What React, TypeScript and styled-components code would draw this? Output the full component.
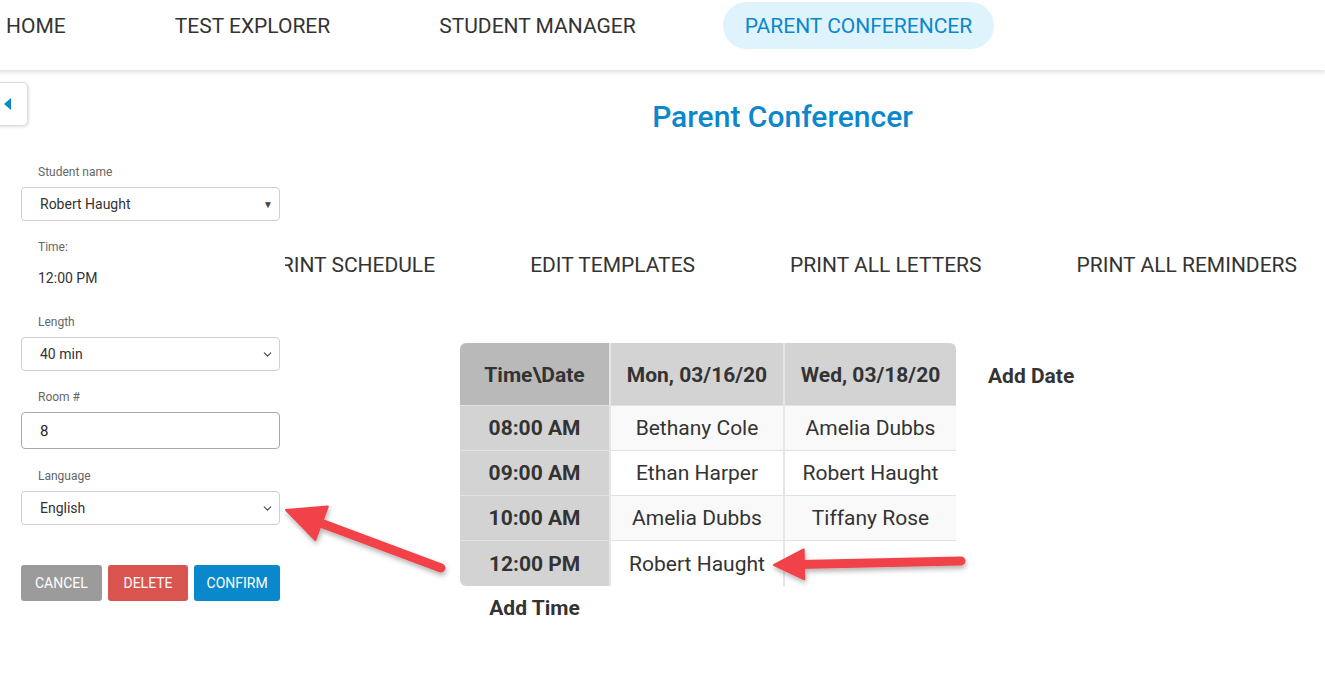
import React from "react"
import styled, {createGlobalStyle} from "styled-components"
import {ChevronDown} from "lucide-react"

const GlobalStyle = createGlobalStyle`
  html, body {
    margin: 0;
    padding: 0;
    background: #fff;
    font-family: Roboto, "Noto Sans", "Liberation Sans", sans-serif;
    color: #333;
  }
  * { box-sizing: border-box; }
`

const Page = styled.div`
  position: relative;
  width: 1325px;
  height: 694px;
  overflow: hidden;
`

const NavBar = styled.nav`
  height: 70px;
  display: flex;
  align-items: flex-start;
  gap: 65px;
  padding-top: 2px;
  margin-left: -16px;
  box-shadow: 0 2px 5px rgba(0, 0, 0, 0.14);
  position: relative;
  z-index: 2;
  background: #fff;
`

const NavItem = styled.div<{$active?: boolean}>`
  height: 47px;
  display: flex;
  align-items: center;
  padding: 0 22px;
  border-radius: 24px;
  font-size: 21px;
  color: ${(p) => (p.$active ? "#0a88cc" : "#333")};
  background: ${(p) => (p.$active ? "#dff3fc" : "transparent")};
`

const Main = styled.main`
  display: flex;
  flex-direction: column;
`

const Title = styled.h1`
  margin: 29px 0 0 240px;
  text-align: center;
  font-size: 30px;
  line-height: 36px;
  font-weight: 500;
  color: #0b88cc;
`

const ActionRow = styled.div`
  display: flex;
  justify-content: flex-end;
  gap: 95px;
  padding-right: 28px;
  margin-top: 118px;
`

const ActionButton = styled.div`
  font-size: 21px;
  line-height: 24px;
  color: #333;
  white-space: nowrap;
`

const ScheduleArea = styled.div`
  display: flex;
  align-items: flex-start;
  gap: 32px;
  margin: 66px 0 0 460px;
`

const TableBlock = styled.div`
  display: flex;
  flex-direction: column;
`

const Table = styled.table`
  border-collapse: separate;
  border-spacing: 0;
  font-size: 21px;
`

const HeadCell = styled.th<{$corner?: "left" | "right"; $dark?: boolean; $w: number}>`
  width: ${(p) => p.$w}px;
  height: 63px;
  padding: 2px 0 0;
  font-weight: 700;
  color: #333;
  background: ${(p) => (p.$dark ? "#b9b9b9" : "#d3d3d3")};
  border-right: ${(p) => (p.$corner === "right" ? "none" : "2px solid #e6e6e6")};
  border-bottom: 1px solid #e2e2e2;
  border-top-left-radius: ${(p) => (p.$corner === "left" ? "6px" : "0")};
  border-top-right-radius: ${(p) => (p.$corner === "right" ? "6px" : "0")};
`

const TimeCell = styled.td<{$last?: boolean}>`
  height: 45px;
  padding: 0;
  text-align: center;
  font-weight: 700;
  background: #d3d3d3;
  border-right: 2px solid #e6e6e6;
  border-bottom: ${(p) => (p.$last ? "none" : "1px solid #e2e2e2")};
  border-bottom-left-radius: ${(p) => (p.$last ? "6px" : "0")};
`

const NameCell = styled.td<{$striped?: boolean; $edge?: boolean; $last?: boolean}>`
  padding: 0;
  text-align: center;
  background: ${(p) => (p.$striped ? "#f9f9f9" : "#fff")};
  border-right: ${(p) => (p.$edge ? "none" : "2px solid #e6e6e6")};
  border-bottom: ${(p) => (p.$last ? "none" : "1px solid #e2e2e2")};
`

const AddLink = styled.div<{$center?: boolean}>`
  font-size: 21px;
  font-weight: 700;
  line-height: 24px;
  color: #333;
  text-align: ${(p) => (p.$center ? "center" : "left")};
`

const AddTime = styled(AddLink)`
  width: 149px;
  margin-top: 10px;
`

const AddDate = styled(AddLink)`
  margin-top: 21px;
`

const Sidebar = styled.aside`
  position: absolute;
  top: 70px;
  left: 0;
  width: 285px;
  bottom: 0;
  background: #fff;
  z-index: 1;
  display: flex;
  flex-direction: column;
`

const ToggleTab = styled.div`
  margin-top: 12px;
  margin-left: -4px;
  width: 32px;
  height: 44px;
  border: 1px solid #dcdcdc;
  border-radius: 0 5px 5px 0;
  box-shadow: 1px 1px 3px rgba(0, 0, 0, 0.12);
  display: flex;
  align-items: center;
  padding-left: 7px;
  background: #fff;
`

const Form = styled.div`
  margin: 39px 0 0 21px;
  width: 259px;
  display: flex;
  flex-direction: column;
`

const Label = styled.div`
  font-size: 12px;
  line-height: 14px;
  color: #666;
  padding-left: 17px;
  margin-bottom: 8px;
`

const Field = styled.div<{$gap: number}>`
  display: flex;
  flex-direction: column;
  margin-bottom: ${(p) => p.$gap}px;
`

const SelectBox = styled.div`
  height: 34px;
  border: 1px solid #cfcfcf;
  border-radius: 4px;
  display: flex;
  align-items: center;
  justify-content: space-between;
  padding: 0 5px 0 18px;
  font-size: 14px;
  color: #333;
`

const Triangle = styled.span`
  font-size: 10px;
  color: #444;
  margin-right: 1px;
`

const InputBox = styled.div`
  height: 37px;
  border: 1px solid #a9a9a9;
  border-radius: 4px;
  display: flex;
  align-items: center;
  padding-left: 18px;
  font-size: 15px;
  color: #222;
`

const StaticValue = styled.div`
  font-size: 14px;
  line-height: 20px;
  padding-left: 17px;
  margin-top: 6px;
  color: #333;
`

const ButtonRow = styled.div`
  display: flex;
  gap: 6px;
  margin-top: 21px;
`

const FormButton = styled.div<{$bg: string; $w: number}>`
  width: ${(p) => p.$w}px;
  height: 36px;
  border-radius: 3px;
  background: ${(p) => p.$bg};
  color: #fff;
  font-size: 14px;
  display: flex;
  align-items: center;
  justify-content: center;
`

const Overlay = styled.svg`
  position: absolute;
  inset: 0;
  pointer-events: none;
  z-index: 3;
`

type Pt = [number, number]

const Arrow = ({from, to, head = 34, wing = 32}: {from: Pt; to: Pt; head?: number; wing?: number}) => {
  const dx = to[0] - from[0]
  const dy = to[1] - from[1]
  const len = Math.hypot(dx, dy)
  const ux = dx / len
  const uy = dy / len
  const bx = to[0] - ux * head
  const by = to[1] - uy * head
  const px = -uy * (wing / 2)
  const py = ux * (wing / 2)
  return (
    <g filter="url(#arrowShadow)">
      <line x1={from[0]} y1={from[1]} x2={bx + ux * 4} y2={by + uy * 4} stroke="#f2434a" strokeWidth={9} strokeLinecap="round" />
      <polygon points={`${to[0]},${to[1]} ${bx + px},${by + py} ${bx - px},${by - py}`} fill="#f2434a" strokeLinejoin="round" stroke="#f2434a" strokeWidth={2} />
    </g>
  )
}

const rows = [
  {time: "08:00 AM", mon: "Bethany Cole", wed: "Amelia Dubbs"},
  {time: "09:00 AM", mon: "Ethan Harper", wed: "Robert Haught"},
  {time: "10:00 AM", mon: "Amelia Dubbs", wed: "Tiffany Rose"},
  {time: "12:00 PM", mon: "Robert Haught", wed: ""},
]

const App = () => {
  return (
    <Page>
      <GlobalStyle />
      <NavBar>
        <NavItem>HOME</NavItem>
        <NavItem>TEST EXPLORER</NavItem>
        <NavItem>STUDENT MANAGER</NavItem>
        <NavItem $active>PARENT CONFERENCER</NavItem>
      </NavBar>

      <Main>
        <Title>Parent Conferencer</Title>
        <ActionRow>
          <ActionButton>PRINT SCHEDULE</ActionButton>
          <ActionButton>EDIT TEMPLATES</ActionButton>
          <ActionButton>PRINT ALL LETTERS</ActionButton>
          <ActionButton>PRINT ALL REMINDERS</ActionButton>
        </ActionRow>

        <ScheduleArea>
          <TableBlock>
            <Table>
              <thead>
                <tr>
                  <HeadCell $dark $corner="left" $w={151}>Time\Date</HeadCell>
                  <HeadCell $w={174}>Mon, 03/16/20</HeadCell>
                  <HeadCell $corner="right" $w={171}>Wed, 03/18/20</HeadCell>
                </tr>
              </thead>
              <tbody>
                {rows.map((r, i) => {
                  const last = i === rows.length - 1
                  return (
                    <tr key={r.time}>
                      <TimeCell $last={last}>{r.time}</TimeCell>
                      <NameCell $striped={i % 2 === 0} $last={last}>{r.mon}</NameCell>
                      <NameCell $striped={i % 2 === 0} $last={last} $edge>{r.wed}</NameCell>
                    </tr>
                  )
                })}
              </tbody>
            </Table>
            <AddTime $center>Add Time</AddTime>
          </TableBlock>
          <AddDate>Add Date</AddDate>
        </ScheduleArea>
      </Main>

      <Sidebar>
        <ToggleTab>
          <svg width="7" height="12" viewBox="0 0 7 12">
            <polygon points="7,0 7,12 0,6" fill="#0a88cc" />
          </svg>
        </ToggleTab>
        <Form>
          <Field $gap={19}>
            <Label>Student name</Label>
            <SelectBox>
              Robert Haught
              <Triangle>▼</Triangle>
            </SelectBox>
          </Field>
          <Field $gap={27}>
            <Label>Time:</Label>
            <StaticValue>12:00 PM</StaticValue>
          </Field>
          <Field $gap={19}>
            <Label>Length</Label>
            <SelectBox>
              40 min
              <ChevronDown size={13} strokeWidth={2} color="#444" />
            </SelectBox>
          </Field>
          <Field $gap={20}>
            <Label>Room #</Label>
            <InputBox>8</InputBox>
          </Field>
          <Field $gap={19}>
            <Label>Language</Label>
            <SelectBox>
              English
              <ChevronDown size={13} strokeWidth={2} color="#444" />
            </SelectBox>
          </Field>
          <ButtonRow>
            <FormButton $bg="#9b9b9b" $w={81}>CANCEL</FormButton>
            <FormButton $bg="#d9534f" $w={81}>DELETE</FormButton>
            <FormButton $bg="#0a88cc" $w={86}>CONFIRM</FormButton>
          </ButtonRow>
        </Form>
      </Sidebar>

      <Overlay width="1325" height="694" viewBox="0 0 1325 694">
        <defs>
          <filter id="arrowShadow" x="-20%" y="-50%" width="140%" height="200%">
            <feDropShadow dx="1" dy="3" stdDeviation="2.5" floodColor="#000" floodOpacity="0.3" />
          </filter>
        </defs>
        <Arrow from={[441, 568]} to={[286, 510]} head={38} wing={36} />
        <Arrow from={[961, 561]} to={[774, 565]} head={30} wing={30} />
      </Overlay>
    </Page>
  )
}

export default App
